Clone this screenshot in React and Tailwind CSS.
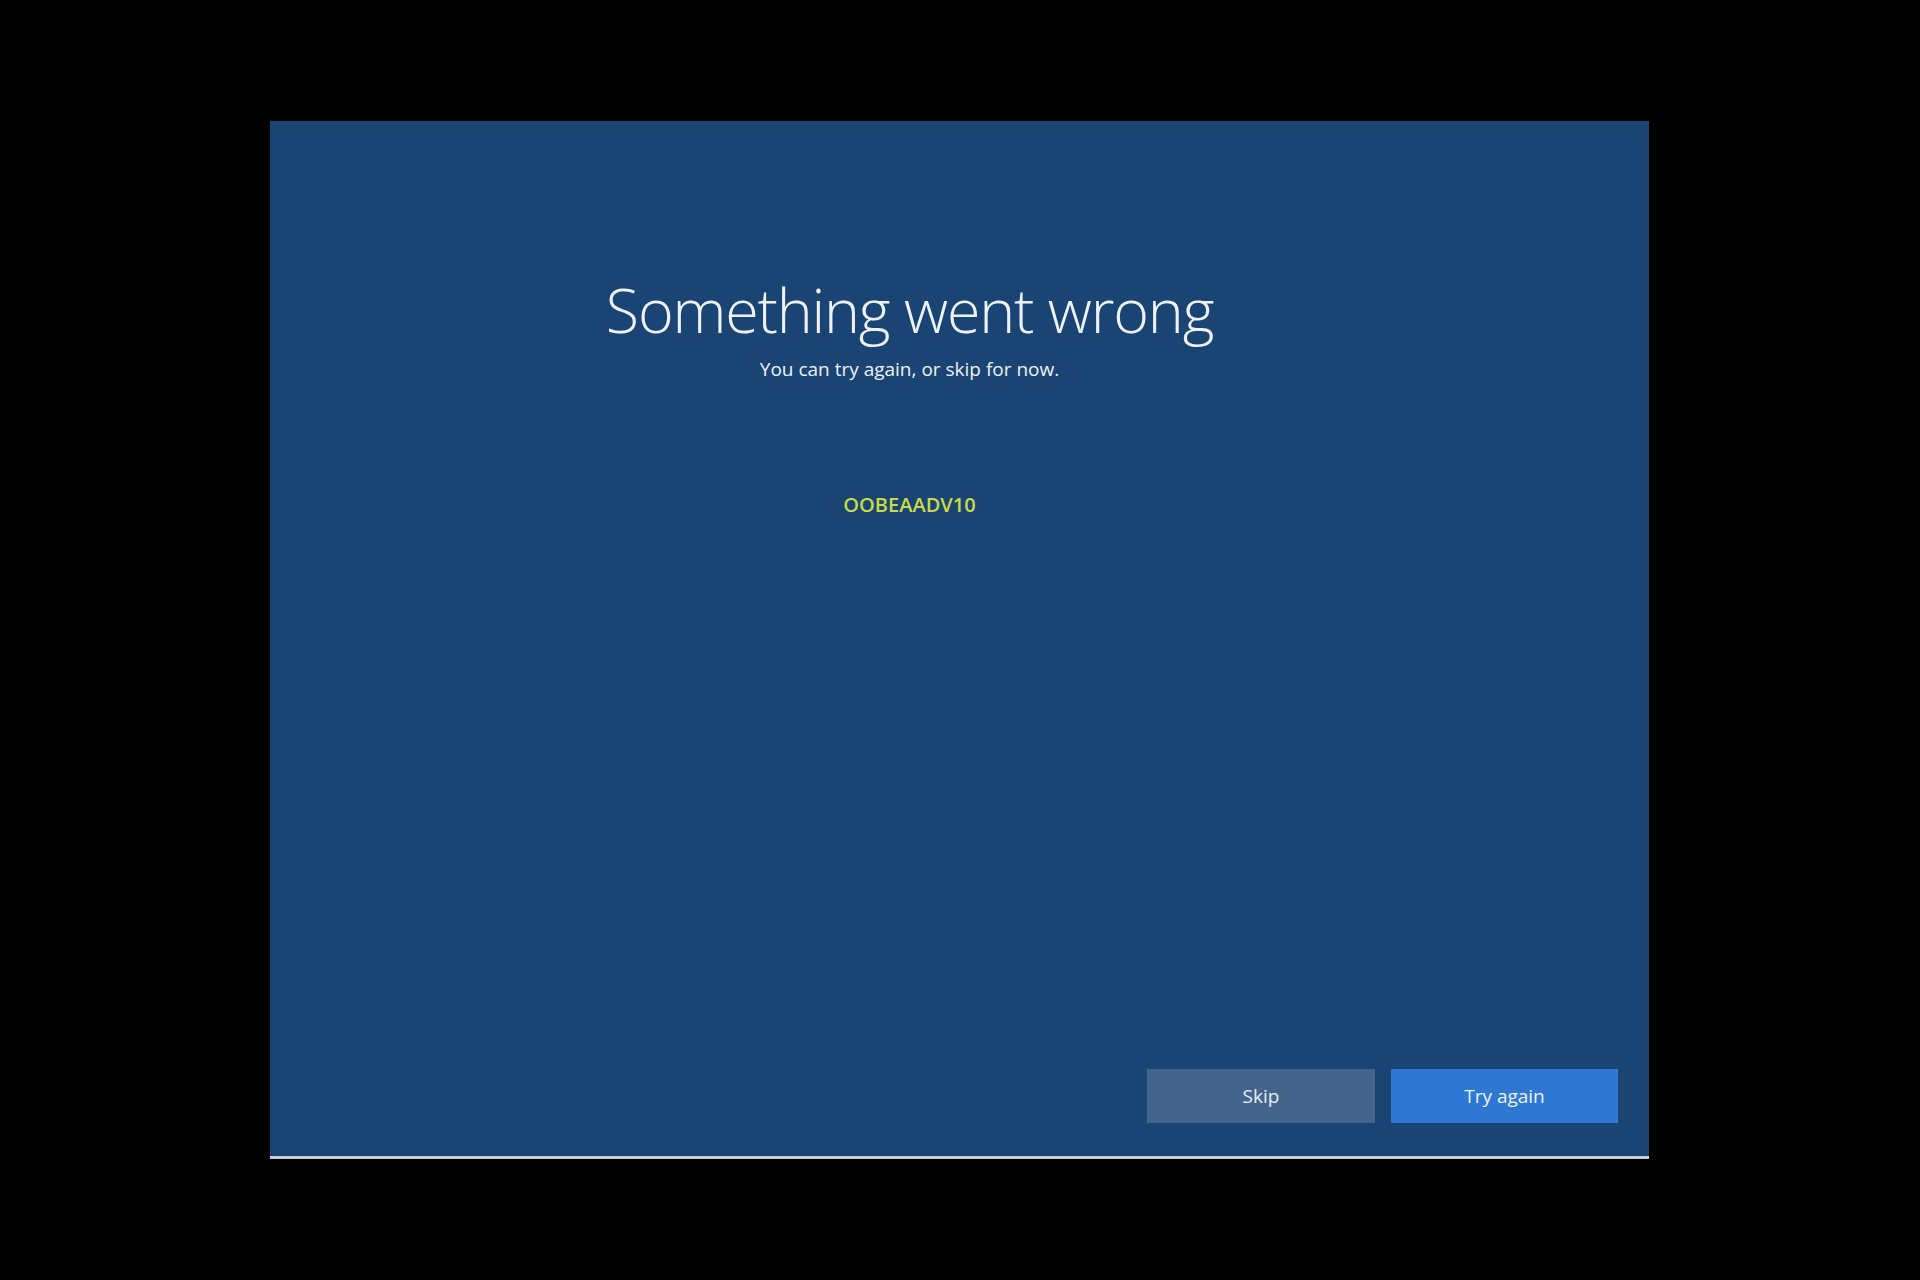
export default function App() {
  return (
    <div className="w-[1920px] h-[1280px] bg-black pt-[121px] pl-[270px]" style={{ fontFamily: '"Open Sans", "Noto Sans", sans-serif' }}>
      <div className="w-[1379px] h-[1038px] bg-[#1a4473] border-b-[3px] border-[#c9ced6] flex flex-col">
        <div className="flex flex-col items-center pr-[100px] pt-[158px]">
          <h1 className="text-[61px] leading-none font-light text-[#eef2f7] tracking-[-1.2px]">Something went wrong</h1>
          <p className="mt-[20px] text-[19px] leading-none text-[#eef2f7]">You can try again, or skip for now.</p>
          <p className="mt-[116px] text-[20px] leading-none font-semibold text-[#c7dc47]">OOBEAADV10</p>
        </div>
        <div className="mt-auto flex justify-end gap-[16px] pr-[31px] pb-[33px]">
          <button className="w-[228px] h-[54px] bg-[#44658b] text-[19px] text-[#e6ecf3]">Skip</button>
          <button className="w-[227px] h-[54px] bg-[#2e77d2] text-[19px] text-[#eef3fa]">Try again</button>
        </div>
      </div>
    </div>
  );
}
